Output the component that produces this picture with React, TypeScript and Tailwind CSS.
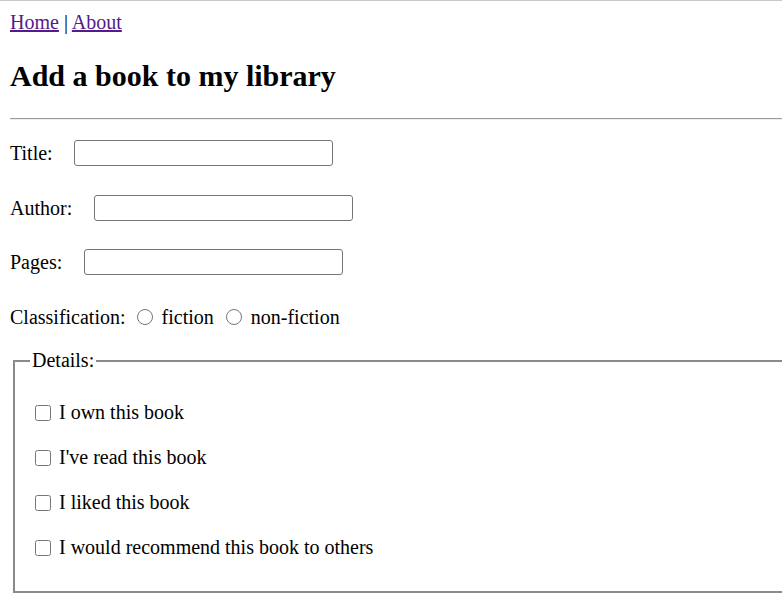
import React from "react";

export default function App() {
  return (
    <div className="min-h-screen bg-white border-t border-[#c8c8c8] px-[10px] pt-[10px] font-['Liberation_Serif',serif] text-[20px] text-black leading-[23px]">
      {/* nav */}
      <div>
        <a href="#" className="text-[#551a8b] underline">Home</a> | <a href="#" className="text-[#551a8b] underline">About</a>
      </div>
      <h2 className="mt-[25px] text-[30px] font-bold leading-[34px]">Add a book to my library</h2>
      <hr className="mt-[25px] mr-[-10px] border-t border-b border-t-[#9a9a9a] border-b-[#eeeeee]" />

      {/* form */}
      <form className="flex flex-col">
        <div className="mt-[20px] flex items-center h-[26px]">
          <label>Title:</label>
          <input type="text" className="ml-[21px] w-[259px] h-[26px] border border-[#767676] rounded-[3px]" />
        </div>
        <div className="mt-[29px] flex items-center h-[26px]">
          <label>Author:</label>
          <input type="text" className="ml-[22px] w-[259px] h-[26px] border border-[#767676] rounded-[3px]" />
        </div>
        <div className="mt-[28px] flex items-center h-[26px]">
          <label>Pages:</label>
          <input type="text" className="ml-[22px] w-[259px] h-[26px] border border-[#767676] rounded-[3px]" />
        </div>
        <div className="mt-[29px] flex items-center h-[26px]">
          <span>Classification:</span>
          <input type="radio" name="cls" className="ml-[11px] w-[16px] h-[16px]" />
          <span className="ml-[9px]">fiction</span>
          <input type="radio" name="cls" className="ml-[12px] w-[16px] h-[16px]" />
          <span className="ml-[9px]">non-fiction</span>
        </div>

        <fieldset className="mt-[19px] ml-[3px] mr-[-20px] border-2 border-[#8a8a8a] px-[15px] pb-[11px] pt-[7px]">
          <legend className="px-[2px]">Details:</legend>
          <div className="flex flex-col">
            {["I own this book", "I've read this book", "I liked this book", "I would recommend this book to others"].map((t, i) => (
              <div key={i} className={`flex items-center h-[25px] ${i === 0 ? "mt-[21px]" : "mt-[20px]"} ${i === 3 ? "mb-[20px]" : ""}`}>
                <input type="checkbox" className="ml-[5px] w-[16px] h-[16px]" />
                <span className="ml-[8px]">{t}</span>
              </div>
            ))}
          </div>
        </fieldset>
      </form>
    </div>
  );
}
